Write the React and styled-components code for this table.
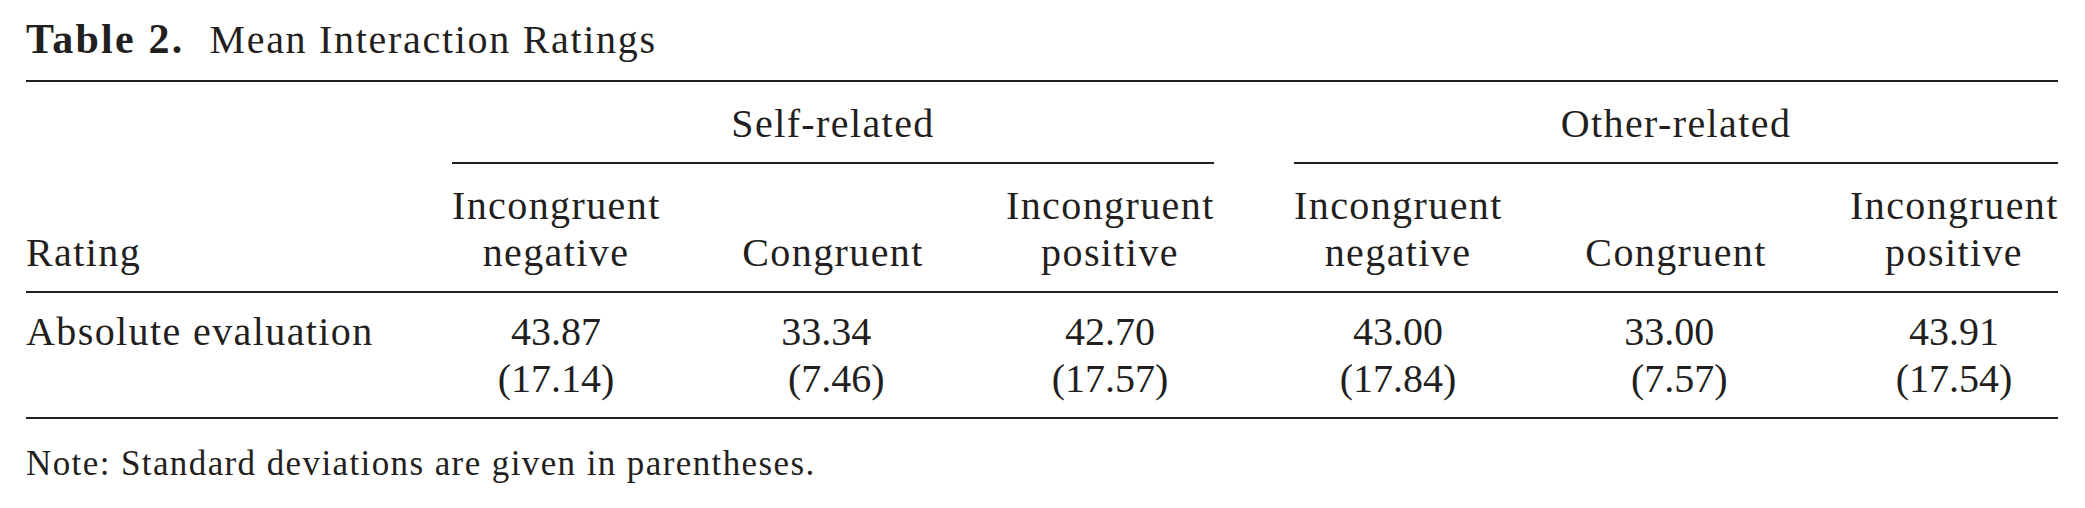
import React from "react";
import styled, { createGlobalStyle } from "styled-components";

const GlobalStyle = createGlobalStyle`
  body {
    margin: 0;
    background: #ffffff;
    color: #231f20;
    font-family: "Liberation Serif", "Times New Roman", serif;
  }
`;

const Page = styled.div`
  width: 2032px;
  padding: 16px 0 0 26px;
`;

const Title = styled.h1`
  margin: 0 0 17px;
  font-size: 40px;
  line-height: 47px;
  font-weight: normal;
  letter-spacing: 1.7px;
  white-space: nowrap;
`;

const Label = styled.b`
  font-size: 42px;
  letter-spacing: 2.2px;
  margin-right: 25px;
`;

const Table = styled.table`
  width: 2032px;
  table-layout: fixed;
  border-collapse: collapse;
  border-top: 2px solid #231f20;
  border-bottom: 2px solid #231f20;
  font-size: 40px;
  line-height: 47px;
  letter-spacing: 1.4px;
`;

const Spanner = styled.th`
  padding: 18px 0 15px;
  font-weight: normal;
  text-align: center;
  border-bottom: ${(p) => (p.$rule ? "2px solid #231f20" : "none")};
`;

const HeadRow = styled.tr`
  border-bottom: 2px solid #231f20;
`;

const HeadCell = styled.th`
  padding: 18px 0 15px;
  font-weight: normal;
  vertical-align: bottom;
  white-space: nowrap;
  text-align: ${(p) => p.$align || "center"};
`;

const Cell = styled.td`
  padding: 15px 0 15px;
  vertical-align: top;
  white-space: nowrap;
  text-align: ${(p) => p.$align || "center"};
`;

const Decimal = styled.span`
  display: inline-grid;
  grid-template-columns: auto auto;
  text-align: left;
  letter-spacing: 0;
`;

const Whole = styled.span`
  text-align: right;
`;

const Note = styled.p`
  margin: 25px 0 0;
  font-size: 35px;
  line-height: 40px;
  letter-spacing: 1.4px;
`;

const columns = [426, 208, 346, 208, 80, 208, 348, 208];

const headers = [
  ["Incongruent", "negative"],
  [null, "Congruent"],
  ["Incongruent", "positive"],
];

const rows = [
  {
    label: "Absolute evaluation",
    self: [
      ["43.87", "17.14"],
      ["33.34", "7.46"],
      ["42.70", "17.57"],
    ],
    other: [
      ["43.00", "17.84"],
      ["33.00", "7.57"],
      ["43.91", "17.54"],
    ],
  },
];

function split(value) {
  const i = value.indexOf(".");
  return [value.slice(0, i), value.slice(i)];
}

function Value({ mean, sd }) {
  const [mw, mf] = split(mean);
  const [sw, sf] = split(sd);
  return (
    <Decimal>
      <Whole>{mw}</Whole>
      <span>{mf}</span>
      <Whole>({sw}</Whole>
      <span>{sf})</span>
    </Decimal>
  );
}

function HeaderGroup() {
  return headers.map(([top, bottom], i) => (
    <HeadCell key={i}>
      {top}
      {top && <br />}
      {bottom}
    </HeadCell>
  ));
}

export default function App() {
  return (
    <Page>
      <GlobalStyle />
      <Title>
        <Label>Table 2.</Label>Mean Interaction Ratings
      </Title>
      <Table>
        <colgroup>
          {columns.map((w, i) => (
            <col key={i} style={{ width: w }} />
          ))}
        </colgroup>
        <thead>
          <tr>
            <Spanner />
            <Spanner colSpan={3} $rule>
              Self-related
            </Spanner>
            <Spanner />
            <Spanner colSpan={3} $rule>
              Other-related
            </Spanner>
          </tr>
          <HeadRow>
            <HeadCell $align="left">Rating</HeadCell>
            <HeaderGroup />
            <HeadCell />
            <HeaderGroup />
          </HeadRow>
        </thead>
        <tbody>
          {rows.map((row) => (
            <tr key={row.label}>
              <Cell $align="left">{row.label}</Cell>
              {row.self.map(([m, s], i) => (
                <Cell key={"s" + i}>
                  <Value mean={m} sd={s} />
                </Cell>
              ))}
              <Cell />
              {row.other.map(([m, s], i) => (
                <Cell key={"o" + i}>
                  <Value mean={m} sd={s} />
                </Cell>
              ))}
            </tr>
          ))}
        </tbody>
      </Table>
      <Note>Note: Standard deviations are given in parentheses.</Note>
    </Page>
  );
}
